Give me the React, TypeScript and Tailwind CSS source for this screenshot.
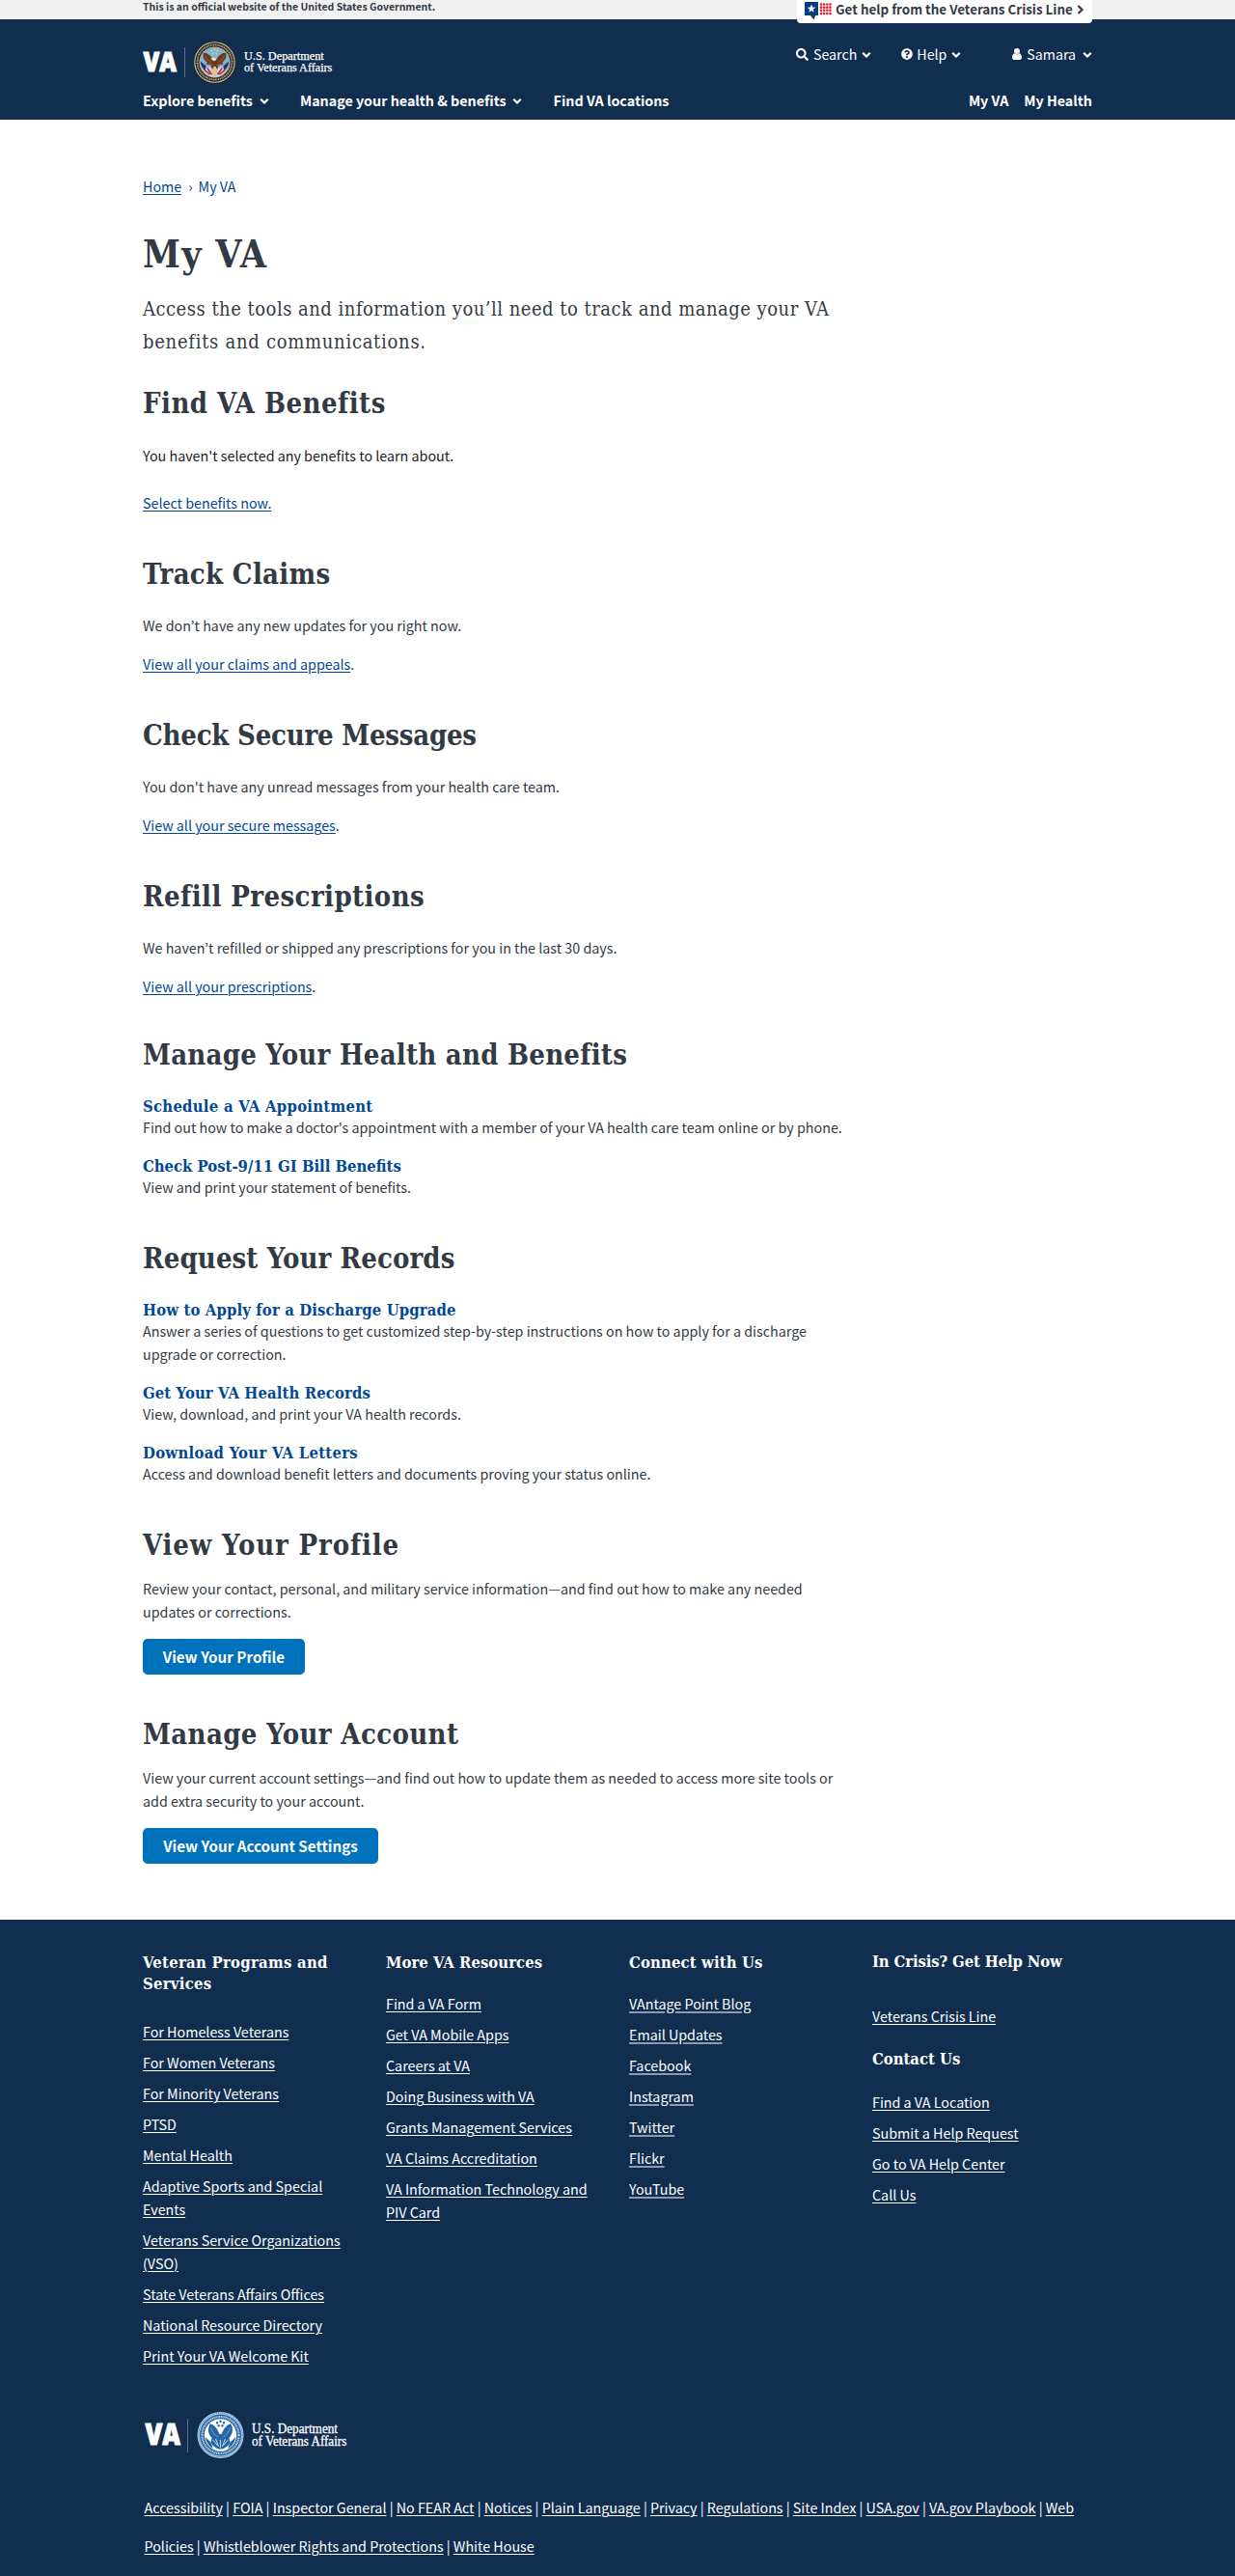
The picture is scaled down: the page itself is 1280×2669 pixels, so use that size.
import React from 'react';
import { FaSearch, FaQuestionCircle } from 'react-icons/fa';

const serif = "font-['DejaVu_Serif_Condensed','DejaVu_Serif',serif] [font-stretch:condensed]";

function Chevron({ className = '' }: { className?: string }) {
  return (
    <svg viewBox="0 0 10 8" className={`h-2 w-2.5 shrink-0 ${className}`} fill="none" stroke="currentColor" strokeWidth="2.2">
      <path d="M1.2 1.7 5 5.5l3.8-3.8" />
    </svg>
  );
}

function UserIcon({ className }: { className: string }) {
  return (
    <svg viewBox="0 0 10 12" className={className} fill="currentColor">
      <circle cx="5" cy="3" r="3" />
      <path d="M2.300 5.300C.7 5.800 0 7.300 0 9.500 0 11 .8 12 2.200 12h5.600C9.200 12 10 11 10 9.500c0-2.200-.7-3.700-2.300-4.200C7 6 6 6.500 5 6.500S3 6 2.300 5.300z" />
    </svg>
  );
}

const dashes = '1.2 .7 .6 .5 1 .8';

function ColorSeal() {
  return (
    <svg viewBox="0 0 44 44" className="h-[43px] w-[43px] shrink-0">
      <circle cx="22" cy="22" r="21.8" fill="#d9b45b" />
      <circle cx="22" cy="22" r="20.6" fill="#1c2547" />
      <circle cx="22" cy="22" r="18.4" fill="none" stroke="#c9ac6a" strokeWidth="2" strokeDasharray={dashes} />
      <circle cx="22" cy="22" r="16.4" fill="#d9b45b" />
      <circle cx="22" cy="22" r="15.6" fill="#7fb3d8" />
      <path d="M8 26c2 7 7 11 14 11.500 7-.5 12-4.500 14-11.500l-8 1-6 2-6-2z" fill="#cfd3e4" />
      <path d="M7 21l6 5-1 5c-3-2-5-6-5-10zM37 21l-6 5 1 5c3-2 5-6 5-10z" fill="#27356b" />
      <path d="M11 30l6 5M14 28l5 7M33 30l-6 5M30 28l-5 7" stroke="#b03246" strokeWidth="1.600" />
      <path d="M10 12c-1 5 1 8 4 10l-1 2 5 1 1 4 3 2 3-2 1-4 5-1-1-2c3-2 5-5 4-10-4 0-7 2-9.500 6l-1.500 2h-2l-1.500-2C17 14 14 12 10 12z" fill="#6b3720" />
      <path d="M12 15c1 4 4 6 7 7M32 15c-1 4-4 6-7 7M15 23c2 1 3 2 5 2M29 23c-2 1-3 2-5 2" stroke="#935a35" strokeWidth="1.100" fill="none" />
      <path d="M18 18.500c1-2 5-2 6 .8l-3 1.500z" fill="#efe7d6" />
      <path d="M20.500 27l1.500-1 1.500 1 1.500 5-2 5h-2l-2-5z" fill="#e0c285" />
      <g fill="#ecd36b">
        <circle cx="22" cy="8.500" r="1" /><circle cx="19" cy="10" r="1" /><circle cx="25" cy="10" r="1" />
        <circle cx="20" cy="13" r="1" /><circle cx="24" cy="13" r="1" />
      </g>
    </svg>
  );
}

function BlueSeal() {
  return (
    <svg viewBox="0 0 50 50" className="h-[50px] w-[49px] shrink-0">
      <circle cx="25" cy="25" r="24.500" fill="#b9d0e6" />
      <circle cx="25" cy="25" r="23.200" fill="none" stroke="#2c6aa8" strokeWidth="1" strokeDasharray="1 1" />
      <circle cx="25" cy="25" r="21.900" fill="#2465a5" />
      <circle cx="25" cy="25" r="19.400" fill="none" stroke="#c6d9eb" strokeWidth="2.200" strokeDasharray={dashes} />
      <circle cx="25" cy="25" r="17" fill="#fff" />
      <path d="M14 13c-3 6-2 11 2 15l-1 3c-1 3 4 8 10 9 6-1 11-6 10-9l-1-3c4-4 5-9 2-15-4 1-7 4-9 9l-1 2h-2l-1-2c-2-5-5-8-9-9z" fill="#2465a5" />
      <path d="M15 17c1 5 4 8 7 10M35 17c-1 5-4 8-7 10" stroke="#7ea6cd" fill="none" />
      <path d="M17 30l5 6M20 29l3 8M33 30l-5 6M30 29l-3 8M25 30v9" stroke="#cfdfee" strokeWidth="1" />
      <path d="M9 27c1 6 4 10 8 12l-2-6zM41 27c-1 6-4 10-8 12l2-6z" fill="#2465a5" />
      <g fill="#2465a5">
        <circle cx="25" cy="10.500" r="1.200" /><circle cx="21.500" cy="12" r="1.200" /><circle cx="28.500" cy="12" r="1.200" />
        <circle cx="23" cy="15" r="1.200" /><circle cx="27" cy="15" r="1.200" />
      </g>
    </svg>
  );
}

function Wordmark({ className }: { className: string }) {
  return (
    <svg viewBox="0 0 36 30" className={className} fill="#fff" stroke="#fff" strokeWidth="0.9">
      <text x="0.500" y="25" textLength="34.500" lengthAdjust="spacingAndGlyphs" className="font-['Open_Sans',sans-serif] text-[28.5px] font-extrabold">VA</text>
    </svg>
  );
}

function DeptName({ className }: { className: string }) {
  return (
    <svg viewBox="0 0 92 26" className={className} fill="#fff" stroke="#fff" strokeWidth="0.25">
      <text x="0" y="10" textLength="82.700" lengthAdjust="spacingAndGlyphs" className="font-['Liberation_Serif',serif] text-[12.6px]">U.S. Department</text>
      <text x="0" y="22" textLength="91.300" lengthAdjust="spacingAndGlyphs" className="font-['Liberation_Serif',serif] text-[12.6px]">of Veterans Affairs</text>
    </svg>
  );
}

function CrisisIcon() {
  const steps = [0, 1, 2, 3];
  return (
    <svg viewBox="0 0 28 19" className="h-[19px] w-7 shrink-0">
      <path d="M0 0h14v14h-3l-1.500 4.500L6 14H0z" fill="#003e7e" />
      <path d="M7 2.600l1.150 3 3.200.15-2.500 2 .85 3.100L7 9.100l-2.700 1.750.85-3.100-2.500-2 3.200-.15z" fill="#fff" />
      {steps.map((r) => steps.map((c) => <circle key={`${r}${c}`} cx={17 + c * 3.15} cy={2.5 + r * 3.15} r="1.3" fill="#e31b2c" />))}
    </svg>
  );
}

const link = 'underline decoration-1 underline-offset-2';

function H2({ children, className }: { children: string; className: string }) {
  return <h2 className={`${serif} whitespace-nowrap text-[29px] leading-[38px] font-bold ${className}`}>{children}</h2>;
}

function Update({ title, track, text, linkText }: { title: string; track: string; text: string; linkText: string }) {
  return (
    <section className="mt-[43px]">
      <H2 className={track}>{title}</H2>
      <p className="mt-[22px]">{text}</p>
      <p className="mt-4"><a className={`${link} text-[#004795]`}>{linkText}</a>.</p>
    </section>
  );
}

function Item({ title, track, text, className }: { title: string; track: string; text: string; className: string }) {
  return (
    <div className={className}>
      <h3 className={`${serif} pt-px text-[16.5px] leading-[19px] font-bold text-[#004795] ${track}`}>{title}</h3>
      <p>{text}</p>
    </div>
  );
}

function FooterLinks({ items, className, thick }: { items: string[]; className: string; thick?: boolean }) {
  return (
    <ul className={`flex flex-col gap-2 ${className}`}>
      {items.map((t) => (
        <li key={t}><a className={thick ? 'underline decoration-2 decoration-[#8d9bad] underline-offset-2' : link}>{t}</a></li>
      ))}
    </ul>
  );
}

const footHead = `${serif} relative top-px text-[16.5px] leading-[22px] font-bold`;

const legal = ['Accessibility', 'FOIA', 'Inspector General', 'No FEAR Act', 'Notices', 'Plain Language', 'Privacy', 'Regulations', 'Site Index', 'USA.gov', 'VA.gov Playbook', 'Web Policies', 'Whistleblower Rights and Protections', 'White House'];

export default function App() {
  return (
    <div className="h-[2669px] overflow-hidden bg-white font-['Noto_Sans_CJK_KR','Noto_Sans',sans-serif] text-[14.3px] leading-6 text-[#323a45]">
      <div className="h-5 bg-[#f1f1f1]">
        <div className="mx-auto flex w-[984px] justify-between">
          <p className="text-[10.5px] leading-[14px] font-bold">This is an official website of the United States Government.</p>
          <div className="relative z-10 flex h-6 w-[306px] items-start rounded-b-[4px] bg-white pl-2">
            <div className="pt-0.5"><CrisisIcon /></div>
            <span className="ml-[4px] whitespace-nowrap text-[13.4px] leading-[18px] font-bold">Get help from the Veterans Crisis Line</span>
            <svg viewBox="0 0 8 10" className="mt-[5px] ml-1 h-2.5 w-2" fill="none" stroke="currentColor" strokeWidth="2.2"><path d="M1.500 1 5.500 5l-4 4" /></svg>
          </div>
        </div>
      </div>

      <header className="h-[104px] bg-[#112e51] text-white">
        <div className="mx-auto w-[984px]">
          <div className="flex h-[65px] items-start justify-between">
            <div className="flex items-start">
              <Wordmark className="mt-[29px] h-[30px] w-9" />
              <div className="mt-[29px] ml-[7px] h-[31px] w-px bg-[#5d7189]" />
              <div className="mt-[22.5px] ml-[9px]"><ColorSeal /></div>
              <DeptName className="mt-8 ml-[9px] h-[26px] w-[92px]" />
            </div>
            <div className="mt-[24px] flex items-center text-[14.2px]">
              <FaSearch className="mr-[5px] h-[13px] w-[13px]" />Search<Chevron className="mt-0.5 ml-[5px] mr-[31px]" />
              <FaQuestionCircle className="mr-1 h-3 w-3" />Help<Chevron className="mt-0.5 ml-[5px] mr-[53px]" />
              <UserIcon className="mr-[5px] h-3 w-2.5" />Samara<Chevron className="mt-0.5 ml-[7px]" />
            </div>
          </div>
          <nav className="mt-[7px] flex items-center font-bold">
            <span>Explore benefits</span><Chevron className="mt-0.5 ml-[7px]" />
            <span className="ml-8">Manage your health &amp; benefits</span><Chevron className="mt-0.5 ml-1.5" />
            <span className="ml-[33px]">Find VA locations</span>
            <span className="ml-auto">My VA</span>
            <span className="ml-4">My Health</span>
          </nav>
        </div>
      </header>

      <main className="mx-auto h-[1865px] w-[984px] pt-[57px]">
        <nav className="flex text-[#004795]">
          <a className={link}>Home</a>
          <span className="mr-1.5 ml-[7px]">›</span>
          <span>My VA</span>
        </nav>
        <div className="w-[728px]">
          <h1 className={`${serif} mt-[33px] text-[39px] leading-[50px] font-bold tracking-[1.3px]`}>My VA</h1>
          <p className={`${serif} mt-[15px] text-[20px] leading-[34px] tracking-[0.49px]`}>
            Access the tools and information you’ll need to track and manage your VA{' '}
            <span className="tracking-[0.72px]">benefits and communications.</span>
          </p>

          <section className="mt-7">
            <H2 className="tracking-[0.48px]">Find VA Benefits</H2>
            <p className="mt-[23px] text-[#212121]">You haven't selected any benefits to learn about.</p>
            <p className="mt-[25px]"><a className={`${link} text-[#004795]`}>Select benefits now.</a></p>
          </section>

          <Update title="Track Claims" track="tracking-[0.3px]" text="We don’t have any new updates for you right now." linkText="View all your claims and appeals" />
          <Update title="Check Secure Messages" track="tracking-[-0.22px]" text="You don't have any unread messages from your health care team." linkText="View all your secure messages" />
          <Update title="Refill Prescriptions" track="tracking-[0.42px]" text="We haven’t refilled or shipped any prescriptions for you in the last 30 days." linkText="View all your prescriptions" />

          <section className="mt-10">
            <H2 className="tracking-[0.25px]">Manage Your Health and Benefits</H2>
            <Item className="mt-6" track="tracking-[0.28px]" title="Schedule a VA Appointment" text="Find out how to make a doctor's appointment with a member of your VA health care team online or by phone." />
            <Item className="mt-[18px]" track="tracking-normal" title="Check Post-9/11 GI Bill Benefits" text="View and print your statement of benefits." />
          </section>

          <section className="mt-[43px]">
            <H2 className="tracking-[0.1px]">Request Your Records</H2>
            <Item className="mt-6" track="tracking-[0.14px]" title="How to Apply for a Discharge Upgrade" text="Answer a series of questions to get customized step-by-step instructions on how to apply for a discharge upgrade or correction." />
            <Item className="mt-[18px]" track="tracking-[0.12px]" title="Get Your VA Health Records" text="View, download, and print your VA health records." />
            <Item className="mt-[18px]" track="tracking-[0.29px]" title="Download Your VA Letters" text="Access and download benefit letters and documents proving your status online." />
          </section>

          <section className="mt-[43px]">
            <H2 className="tracking-[0.85px]">View Your Profile</H2>
            <p className="mt-3.5">Review your contact, personal, and military service information—and find out how to make any needed<br />updates or corrections.</p>
            <button className="mt-4 block h-[37px] w-[168px] rounded-[5px] bg-[#0071bb] text-[15.2px] leading-[37px] font-bold text-white">View Your Profile</button>
          </section>

          <section className="mt-[43px]">
            <H2 className="tracking-[0.37px]">Manage Your Account</H2>
            <p className="mt-3.5">View your current account settings—and find out how to update them as needed to access more site tools or<br />add extra security to your account.</p>
            <button className="mt-4 block h-[37px] w-[244px] rounded-[5px] bg-[#0071bb] text-[15.2px] leading-[37px] font-bold text-white">View Your Account Settings</button>
          </section>
        </div>
      </main>

      <footer className="h-[680px] bg-[#112e51] text-white">
        <div className="mx-auto w-[984px]">
          <div className="flex h-[509px] pt-[33px]">
            <div className="w-[252px]">
              <h2 className={`${footHead} tracking-[0.29px]`}>Veteran Programs and<br />Services</h2>
              <FooterLinks className="mt-[27px] w-[215px]" items={['For Homeless Veterans', 'For Women Veterans', 'For Minority Veterans', 'PTSD', 'Mental Health', 'Adaptive Sports and Special Events', 'Veterans Service Organizations (VSO)', 'State Veterans Affairs Offices', 'National Resource Directory', 'Print Your VA Welcome Kit']} />
            </div>
            <div className="w-[252px]">
              <h2 className={`${footHead} tracking-[0.05px]`}>More VA Resources</h2>
              <FooterLinks className="mt-5 w-[215px]" items={['Find a VA Form', 'Get VA Mobile Apps', 'Careers at VA', 'Doing Business with VA', 'Grants Management Services', 'VA Claims Accreditation', 'VA Information Technology and PIV Card']} />
            </div>
            <div className="w-[252px]">
              <h2 className={`${footHead} tracking-[0.15px]`}>Connect with Us</h2>
              <FooterLinks thick className="mt-5" items={['VAntage Point Blog', 'Email Updates', 'Facebook', 'Instagram', 'Twitter', 'Flickr', 'YouTube']} />
            </div>
            <div className="-mt-px w-[228px]">
              <h2 className={`${footHead} tracking-[-0.12px]`}>In Crisis? Get Help Now</h2>
              <FooterLinks className="mt-[34px]" items={['Veterans Crisis Line']} />
              <h2 className={`${footHead} mt-[21px] tracking-normal`}>Contact Us</h2>
              <FooterLinks className="mt-[22px]" items={['Find a VA Location', 'Submit a Help Request', 'Go to VA Help Center', 'Call Us']} />
            </div>
          </div>

          <div className="flex h-[80px] items-start pl-0.5">
            <Wordmark className="mt-[8px] h-[32px] w-[38px]" />
            <div className="mt-2 ml-[6px] h-[35px] w-px bg-[#5d7189]" />
            <div className="ml-[9px]"><BlueSeal /></div>
            <DeptName className="mt-3 ml-2 h-7 w-[99px]" />
          </div>

          <p className="pl-[1.5px] leading-10">
            {legal.map((t, i) => (
              <React.Fragment key={t}>
                {i > 0 && ' | '}
                <a className={link}>{t}</a>
              </React.Fragment>
            ))}
          </p>
        </div>
      </footer>
    </div>
  );
}
